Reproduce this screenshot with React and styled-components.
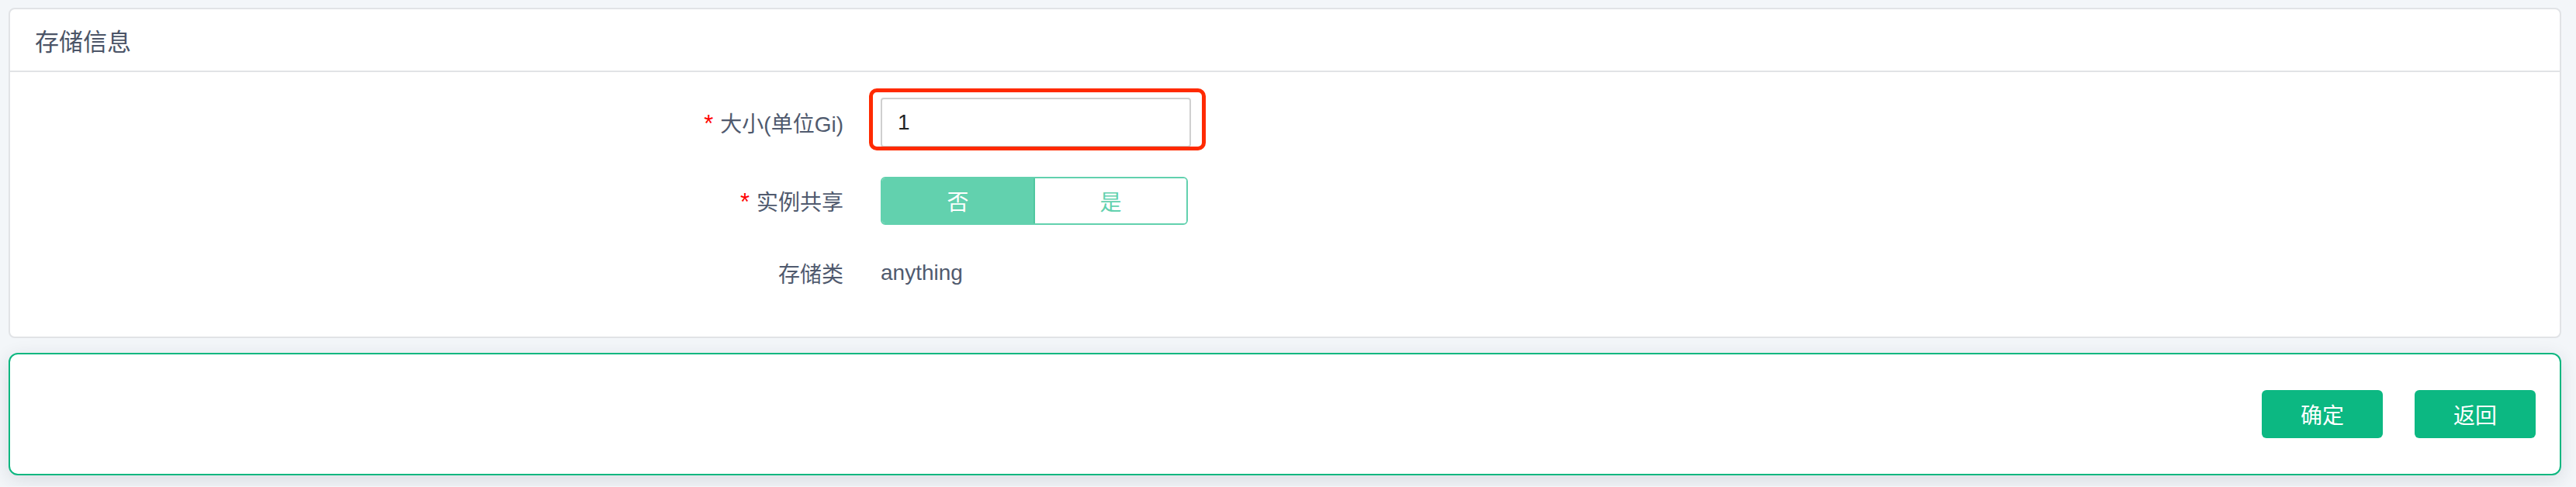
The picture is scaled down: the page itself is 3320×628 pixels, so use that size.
import React, { useState } from "react";
import styled, { createGlobalStyle } from "styled-components";

const GlobalStyle = createGlobalStyle`
  body {
    margin: 0;
    background: #f3f6f9;
    font-family: "Liberation Sans", "Noto Sans CJK SC", sans-serif;
  }
`;

const Page = styled.div`
  display: flex;
  flex-direction: column;
  gap: 19px;
  padding: 10px 19px 14px 11px;
`;

const Card = styled.div`
  box-sizing: border-box;
  height: 426px;
  background: #fff;
  border: 2px solid #e1e3e6;
  border-radius: 8px;
`;

const CardHeader = styled.div`
  height: 79px;
  display: flex;
  align-items: center;
  padding-left: 32px;
  border-bottom: 2px solid #e1e3e6;
  font-size: 31px;
  color: #4b5467;
`;

const Form = styled.div`
  display: flex;
  flex-direction: column;
  gap: 38px;
  padding-top: 33px;
`;

const Row = styled.div`
  display: flex;
  align-items: center;
  gap: 48px;
  height: ${(p) => p.h || 62}px;
`;

const Label = styled.div`
  width: 1074px;
  text-align: right;
  font-size: 28px;
  color: #505a6e;
`;

const Star = styled.span`
  color: #ff0000;
  font-size: 31px;
  margin-right: 9px;
`;

const InputWrap = styled.div`
  position: relative;
`;

const Input = styled.input`
  box-sizing: border-box;
  width: 400px;
  height: 64px;
  padding: 0 20px;
  border: 2px solid #cfcfcf;
  border-radius: 4px;
  font-family: inherit;
  font-size: 28px;
  color: #222;
  outline: none;
`;

const Highlight = styled.div`
  position: absolute;
  top: -12px;
  left: -15px;
  right: -19px;
  bottom: -4px;
  border: 5px solid #ff2a00;
  border-radius: 10px;
  pointer-events: none;
`;

const Toggle = styled.div`
  display: flex;
  width: 396px;
  height: 62px;
  box-sizing: border-box;
  border: 2px solid #62d1ae;
  border-radius: 6px;
  overflow: hidden;
`;

const ToggleOption = styled.div`
  flex: 1;
  display: flex;
  align-items: center;
  justify-content: center;
  font-size: 28px;
  background: ${(p) => (p.active ? "#62d1ae" : "#fff")};
  color: ${(p) => (p.active ? "#fff" : "#62d1ae")};
  & + & {
    border-left: 2px solid #4fc79f;
  }
`;

const Value = styled.div`
  font-size: 28px;
  color: #505a6e;
`;

const Footer = styled.div`
  box-sizing: border-box;
  height: 158px;
  display: flex;
  align-items: center;
  justify-content: flex-end;
  gap: 41px;
  padding-right: 31px;
  background: #fff;
  border: 2px solid #0db780;
  border-radius: 12px;
  box-shadow: 0 6px 24px rgba(30, 40, 60, 0.12);
`;

const Button = styled.button`
  width: 156px;
  height: 62px;
  border: none;
  border-radius: 6px;
  background: #0cb882;
  color: #fff;
  font-family: inherit;
  font-size: 28px;
  cursor: pointer;
`;

const App = () => {
  const [size, setSize] = useState("1");
  const [shared, setShared] = useState(false);

  return (
    <>
      <GlobalStyle />
      <Page>
        <Card>
          <CardHeader>存储信息</CardHeader>
          <Form>
            <Row h={64}>
              <Label>
                <Star>*</Star>大小(单位Gi)
              </Label>
              <InputWrap>
                <Input value={size} onChange={(e) => setSize(e.target.value)} />
                <Highlight />
              </InputWrap>
            </Row>
            <Row>
              <Label>
                <Star>*</Star>实例共享
              </Label>
              <Toggle>
                <ToggleOption active={!shared} onClick={() => setShared(false)}>
                  否
                </ToggleOption>
                <ToggleOption active={shared} onClick={() => setShared(true)}>
                  是
                </ToggleOption>
              </Toggle>
            </Row>
            <Row h={48}>
              <Label>存储类</Label>
              <Value>anything</Value>
            </Row>
          </Form>
        </Card>
        <Footer>
          <Button>确定</Button>
          <Button>返回</Button>
        </Footer>
      </Page>
    </>
  );
};

export default App;
